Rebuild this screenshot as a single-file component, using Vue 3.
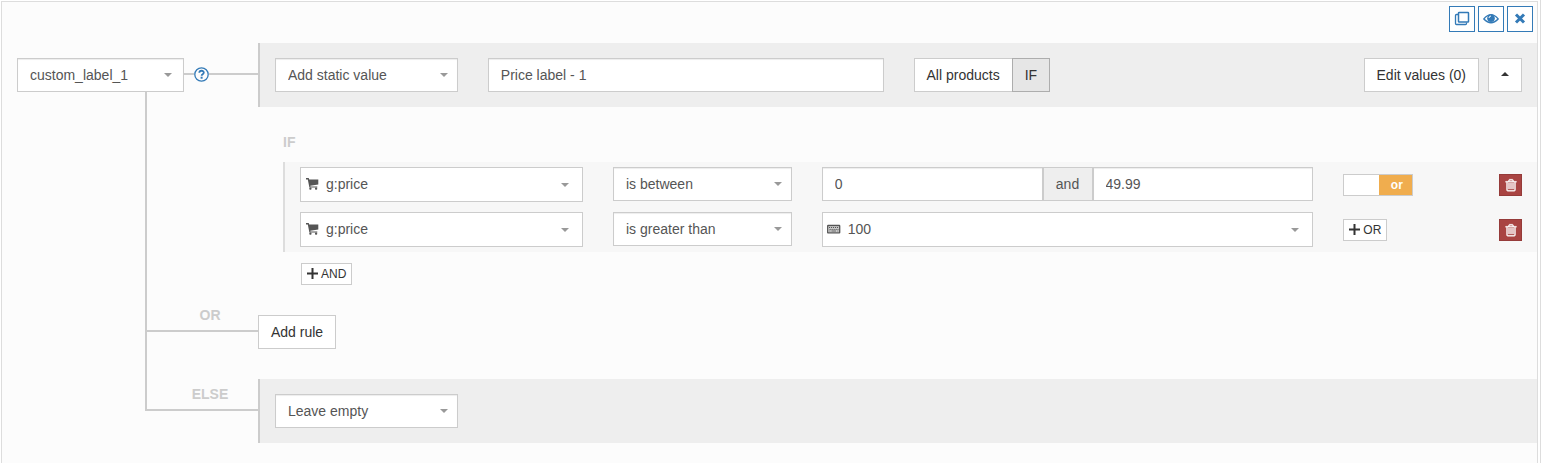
<script setup>
import { ref } from 'vue'

const target = ref('custom_label_1')
const action = ref('Add static value')
const staticValue = ref('Price label - 1')
const fallback = ref('Leave empty')
const useOr = ref(true)
const conditions = ref([
  { id: 1, field: 'g:price', operator: 'is between', from: '0', to: '49.99' },
  { id: 2, field: 'g:price', operator: 'is greater than', value: '100' },
])
</script>

<template>
  <main class="page">
    <section class="panel">
      <div class="toolbar">
        <button type="button" class="tool" aria-label="Duplicate">
          <svg width="16" height="16" viewBox="0 0 16 16" fill="none" stroke="currentColor">
            <path d="M4 3.500H2.500a1 1 0 0 0-1 1v8a1 1 0 0 0 1 1h9a1 1 0 0 0 1-1V11.500" stroke-width="1.300" />
            <rect x="4.500" y="1.500" width="10" height="9.500" rx=".6" fill="#fff" stroke-width="1.500" />
          </svg>
        </button>
        <button type="button" class="tool" aria-label="Preview">
          <svg width="16" height="16" viewBox="0 0 16 16">
            <path d="M.8 8Q8-.8 15.2 8 8 15.500 .8 8z" fill="none" stroke="currentColor" stroke-width="1.300" />
            <circle cx="8" cy="7.300" r="3.800" fill="currentColor" />
            <path d="M6 7a2.100 2.100 0 0 1 2-2" fill="none" stroke="#fff" stroke-width="1" />
          </svg>
        </button>
        <button type="button" class="tool" aria-label="Remove">
          <svg width="16" height="16" viewBox="0 0 16 16">
            <path d="M4 3.500l8 8M12 3.500l-8 8" stroke="currentColor" stroke-width="3" />
          </svg>
        </button>
      </div>

      <div class="row">
        <div class="target">
          <span class="select target-select">
            <select v-model="target" aria-label="Target field"><option>custom_label_1</option></select>
          </span>
          <span class="link-line short"></span>
          <a href="#" class="help" aria-label="Help">
            <svg width="15" height="15" viewBox="0 0 15 15" fill="none" stroke="currentColor">
              <circle cx="7.5" cy="7.5" r="6.7" stroke-width="1.3" />
              <path d="M5.3 5.8C5.4 3.1 9.8 3.1 9.8 5.6c0 1.6-2.2 1.6-2.2 3.2" stroke-width="1.8" />
              <path d="M7.6 9.7v2" stroke-width="2" />
            </svg>
          </a>
          <span class="link-line"></span>
        </div>
        <div class="bar">
          <div class="cell">
            <span class="select">
              <select v-model="action" aria-label="Action"><option>Add static value</option></select>
            </span>
          </div>
          <div class="cell">
            <input v-model="staticValue" class="text" type="text" aria-label="Static value">
          </div>
          <div class="cell actions">
            <div class="group">
              <button type="button" class="btn">All products</button>
              <button type="button" class="btn active">IF</button>
            </div>
            <div class="right">
              <button type="button" class="btn">Edit values (0)</button>
              <button type="button" class="btn fold" aria-label="Collapse"><span class="up"></span></button>
            </div>
          </div>
        </div>
      </div>

      <div class="row">
        <div class="trunk"></div>
        <div class="conditions">
          <div class="caption">IF</div>
          <div class="list">
            <div v-for="c in conditions" :key="c.id" class="condition">
              <div class="cell">
                <span class="select with-icon">
                  <svg class="lead" width="14" height="14" viewBox="0 0 14 14" fill="currentColor">
                    <path d="M1 1h2.700l.5 1.500H13.300V7.500L5.300 8.700l.1.700H12.300V10.600H4.400L2.800 2.400H1z" />
                    <rect x="4.300" y="10.500" width="2.200" height="2.200" rx=".8" />
                    <rect x="10" y="10.500" width="2.200" height="2.200" rx=".8" />
                  </svg>
                  <select v-model="c.field" aria-label="Field"><option>g:price</option></select>
                </span>
              </div>
              <div class="cell">
                <span class="select">
                  <select v-model="c.operator" aria-label="Operator">
                    <option>is between</option>
                    <option>is greater than</option>
                  </select>
                </span>
              </div>
              <div class="cell">
                <div v-if="c.to" class="range">
                  <input v-model="c.from" class="text" type="text" aria-label="From">
                  <span class="addon">and</span>
                  <input v-model="c.to" class="text" type="text" aria-label="To">
                </div>
                <span v-else class="select with-icon">
                  <svg class="lead" width="14" height="14" viewBox="0 0 14 14">
                    <rect x=".7" y="3.500" width="12" height="7.300" rx=".4" fill="#ddd" stroke="currentColor" stroke-width="1.300" />
                    <path d="M2 5.500h10M2.500 7.300h9" stroke="currentColor" stroke-width="1.200" stroke-dasharray="1.200 .8" />
                    <path d="M2.300 9h1.200M4.300 9h5M10.300 9h1.200" stroke="currentColor" />
                  </svg>
                  <select v-model="c.value" aria-label="Value"><option>100</option></select>
                </span>
              </div>
              <div class="cell tail">
                <label v-if="c.to" class="toggle">
                  <input v-model="useOr" type="checkbox" aria-label="Combine with or">
                  <span>or</span>
                </label>
                <button v-else type="button" class="btn small">
                  <svg width="12" height="12" viewBox="0 0 12 12"><path d="M5.500 0v11M0 5.500h11" stroke="currentColor" stroke-width="2" /></svg>OR
                </button>
                <button type="button" class="delete" aria-label="Delete condition">
                  <svg width="14" height="14" viewBox="0 0 1792 1792" fill="currentColor" stroke="currentColor" stroke-width="50">
                    <path d="M704 1376v-704q0-14-9-23t-23-9h-64q-14 0-23 9t-9 23v704q0 14 9 23t23 9h64q14 0 23-9t9-23zm256 0v-704q0-14-9-23t-23-9h-64q-14 0-23 9t-9 23v704q0 14 9 23t23 9h64q14 0 23-9t9-23zm256 0v-704q0-14-9-23t-23-9h-64q-14 0-23 9t-9 23v704q0 14 9 23t23 9h64q14 0 23-9t9-23zm128 124v-948h-896v948q0 22 7 40.500t14.500 27 10.500 8.500h832q3 0 10.500-8.500t14.500-27 7-40.500zm-672-1076h448l-48-117q-7-9-17-11h-317q-10 2-17 11zm928 32v64q0 14-9 23t-23 9h-96v948q0 83-47 143.500t-113 60.500h-832q-66 0-113-58.500t-47-141.500v-952h-96q-14 0-23-9t-9-23v-64q0-14 9-23t23-9h309l70-167q15-37 54-63t79-26h320q40 0 79 26t54 63l70 167h309q14 0 23 9t9 23z" />
                  </svg>
                </button>
              </div>
            </div>
          </div>
          <button type="button" class="btn small and">
            <svg width="12" height="12" viewBox="0 0 12 12"><path d="M5.500 0v11M0 5.500h11" stroke="currentColor" stroke-width="2" /></svg>AND
          </button>
        </div>
      </div>

      <div class="row">
        <div class="trunk"><div class="branch">OR</div></div>
        <div class="add"><button type="button" class="btn">Add rule</button></div>
      </div>

      <div class="row">
        <div class="trunk end"><div class="branch">ELSE</div></div>
        <div class="bar">
          <div class="cell">
            <span class="select">
              <select v-model="fallback" aria-label="Otherwise"><option>Leave empty</option></select>
            </span>
          </div>
        </div>
      </div>
    </section>
  </main>
</template>

<style>
body {
  margin: 0;
  background: #fff;
}
</style>

<style scoped>
* {
  box-sizing: border-box;
}
.page {
  display: flex;
  min-height: 100vh;
  margin-right: 5px;
  padding: 1px 2px 0 1px;
  border-right: 1px solid #ddd;
  font: 14px/20px "Liberation Sans", Arial, sans-serif;
  color: #555;
}
.panel {
  flex: 1;
  min-width: 0;
  border: solid #ddd;
  border-width: 1px 1px 0;
  background: #fcfcfc;
}
button,
input,
select {
  margin: 0;
  font: inherit;
  color: inherit;
  border-radius: 0;
}
button {
  cursor: pointer;
}
.toolbar {
  display: flex;
  justify-content: flex-end;
  gap: 3px;
  padding: 4px 4px 11px;
}
.tool {
  display: flex;
  align-items: center;
  justify-content: center;
  width: 26px;
  height: 26px;
  padding: 0;
  border: 1px solid #337ab7;
  background: #fff;
  color: #337ab7;
}
.row {
  display: grid;
  grid-template-columns: 256px minmax(0, 1fr);
}
.target {
  position: relative;
  display: flex;
  align-items: center;
  padding-left: 15px;
}
.target::after {
  content: "";
  position: absolute;
  left: 143px;
  top: 49px;
  bottom: 0;
  border-left: 2px solid #ccc;
}
.target-select {
  width: 167px;
}
.link-line {
  flex: 1;
  height: 2px;
  margin-bottom: 2px;
  background: #ccc;
}
.link-line.short {
  flex: 0 0 10px;
}
.help {
  height: 15px;
  margin-bottom: 1px;
  color: #337ab7;
}
.help svg {
  display: block;
}
.bar {
  display: grid;
  grid-template-columns: 2fr 4fr 6fr;
  padding: 15px 0;
  border-left: 2px solid #ccc;
  background: #eee;
}
.cell {
  min-width: 0;
  padding: 0 15px;
}
.select {
  position: relative;
  display: block;
}
.select select,
.text {
  display: block;
  width: 100%;
  height: 34px;
  padding: 6px 12px;
  border: 1px solid #ccc;
  background: #fff;
  box-shadow: inset 0 1px 1px rgba(0, 0, 0, 0.075);
  outline: none;
  appearance: none;
}
.select::after {
  content: "";
  position: absolute;
  right: 10px;
  top: 15px;
  border: solid transparent;
  border-width: 4px 4px 0;
  border-top-color: #999;
  pointer-events: none;
}
.target-select::after {
  right: 12px;
}
.with-icon select {
  height: 35px;
  padding: 5px 12px 7px 25px;
  box-shadow: none;
}
.with-icon::after {
  right: 14px;
  top: 16px;
}
.lead {
  position: absolute;
  left: 5px;
  top: 10px;
  pointer-events: none;
}
.actions,
.tail {
  display: flex;
  justify-content: space-between;
}
.group,
.right {
  display: flex;
}
.right {
  gap: 9px;
}
.btn {
  height: 34px;
  padding: 6px 12px;
  border: 1px solid #ccc;
  background: #fff;
  color: #333;
  white-space: nowrap;
}
.btn.active {
  margin-left: -1px;
  border-color: #adadad;
  background: #e6e6e6;
}
.fold {
  display: flex;
  align-items: center;
  justify-content: center;
  width: 34px;
  padding: 0 0 2px;
}
.up {
  border: solid transparent;
  border-width: 0 4px 4px;
  border-bottom-color: #333;
}
.trunk {
  margin-left: 143px;
  border-left: 2px solid #ccc;
}
.trunk.end {
  align-self: start;
}
.branch {
  height: 32px;
  padding: 5px 0 5px 15px;
  border-bottom: 2px solid #ccc;
  color: #ccc;
  font-weight: bold;
  text-align: center;
}
.add {
  padding: 15px 0 30px;
}
.conditions {
  padding: 25px 0 15px 25px;
}
.caption {
  margin-bottom: 10px;
  color: #ccc;
  font-weight: bold;
}
.list {
  border-left: 2px solid #ddd;
  background: #f7f7f7;
}
.condition {
  display: grid;
  grid-template-columns: 3fr 2fr 5fr 2fr;
  padding: 5px 0;
}
.range {
  display: flex;
}
.range .text {
  flex: 1;
  min-width: 0;
}
.addon {
  width: 50px;
  height: 34px;
  padding: 6px 0;
  border: 1px solid #ccc;
  background: #eee;
  text-align: center;
}
.tail {
  height: 35px;
  align-items: center;
}
.toggle {
  position: relative;
  display: flex;
  width: 70px;
  height: 22px;
  border: 1px solid #ccc;
  background: #fff;
  cursor: pointer;
}
.toggle input {
  position: absolute;
  opacity: 0;
}
.toggle span {
  width: 33px;
  margin-left: auto;
  padding-left: 2px;
  background: #f0ad4e;
  color: #fff;
  font-size: 12px;
  font-weight: bold;
  text-align: center;
}
.small {
  display: flex;
  align-items: center;
  gap: 2px;
  height: 22px;
  padding: 0 5px;
  font-size: 12px;
}
.and {
  margin: 11px 0 0 18px;
}
.delete {
  display: flex;
  align-items: center;
  justify-content: center;
  width: 23px;
  height: 22px;
  padding: 0;
  border: 1px solid #953b39;
  background: #a94442;
  color: #fff;
}
</style>
